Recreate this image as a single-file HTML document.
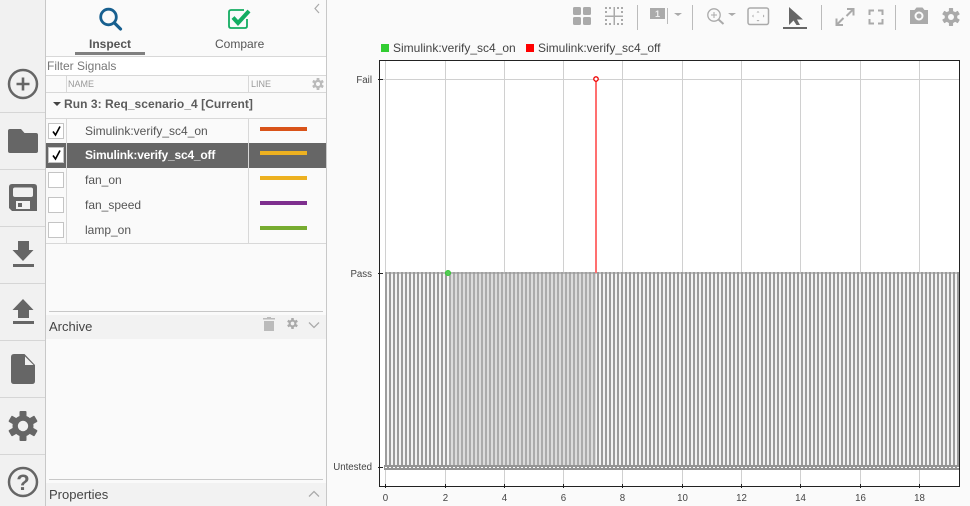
<!DOCTYPE html>
<html><head><meta charset="utf-8"><style>
html,body{margin:0;padding:0;width:970px;height:506px;overflow:hidden;background:#fafafa;font-family:"Liberation Sans",sans-serif;color:#555}
.a{position:absolute}
.t{position:absolute;font-size:12px;line-height:14px;white-space:nowrap}
.cb{position:absolute;left:48px;width:14px;height:14px;background:#fff;border:1px solid #c4c4c4}
.ln{position:absolute;left:260px;width:47px;height:4px}
.sep{position:absolute;left:0;width:45px;height:1px;background:#d6d6d6}
</style></head><body>
<div class="a" style="left:0;top:0;width:45px;height:506px;background:#f1f1f1;border-right:1px solid #c8c8c8"></div>
<div class="sep" style="top:112px"></div><div class="sep" style="top:169px"></div><div class="sep" style="top:226px"></div><div class="sep" style="top:283px"></div><div class="sep" style="top:340px"></div><div class="sep" style="top:397px"></div><div class="sep" style="top:454px"></div>
<div class="a" style="left:46px;top:0;width:280px;height:506px;background:#fafafa;border-right:1px solid #c8c8c8"></div>
<div class="a" style="left:46px;top:56px;width:280px;height:1px;background:#d8d8d8"></div>
<div class="a" style="left:46px;top:57px;width:280px;height:18px;background:#fff"></div>
<div class="t" style="left:47px;top:59px;color:#777">Filter Signals</div>
<div class="a" style="left:46px;top:75px;width:280px;height:1px;background:#d8d8d8"></div>
<div class="a" style="left:46px;top:92px;width:280px;height:1px;background:#d8d8d8"></div>
<div class="a" style="left:66px;top:76px;width:1px;height:16px;background:#d8d8d8"></div>
<div class="a" style="left:248px;top:76px;width:1px;height:16px;background:#d8d8d8"></div>
<div class="t" style="left:68px;top:77px;font-size:9px;color:#999">NAME</div>
<div class="t" style="left:251px;top:77px;font-size:9px;color:#999">LINE</div>
<div class="t" style="left:64px;top:97px;font-weight:bold;color:#5c5c5c;letter-spacing:.05px">Run 3: Req_scenario_4 [Current]</div>
<svg class="a" style="left:52px;top:101px" width="10" height="6"><path d="M1 1h8L5 5z" fill="#444"/></svg>
<div class="a" style="left:46px;top:118px;width:280px;height:1px;background:#d8d8d8"></div>
<div class="a" style="left:46px;top:243px;width:280px;height:1px;background:#d8d8d8"></div>
<div class="a" style="left:66px;top:119px;width:1px;height:124px;background:#d8d8d8"></div>
<div class="a" style="left:248px;top:119px;width:1px;height:124px;background:#d8d8d8"></div>
<div class="a" style="left:46px;top:143px;width:280px;height:25px;background:#666"></div>
<div class="a" style="left:66px;top:143px;width:1px;height:25px;background:#d8d8d8"></div>
<div class="a" style="left:248px;top:143px;width:1px;height:25px;background:#d8d8d8"></div>
<div class="cb" style="top:123px"></div><div class="cb" style="top:147px"></div><div class="cb" style="top:172px"></div><div class="cb" style="top:197px"></div><div class="cb" style="top:222px"></div>
<svg class="a" style="left:48px;top:123px" width="16" height="16"><path d="M5 8.500l2.500 3.500 4.500-8.500" fill="none" stroke="#000" stroke-width="1.600"/></svg>
<svg class="a" style="left:48px;top:147px" width="16" height="16"><path d="M5 8.500l2.500 3.500 4.500-8.500" fill="none" stroke="#000" stroke-width="1.600"/></svg>
<div class="t" style="left:85px;top:124px">Simulink:verify_sc4_on</div>
<div class="t" style="left:85px;top:148px;color:#fff;font-weight:bold;letter-spacing:-.2px">Simulink:verify_sc4_off</div>
<div class="t" style="left:85px;top:173px">fan_on</div>
<div class="t" style="left:85px;top:198px">fan_speed</div>
<div class="t" style="left:85px;top:223px">lamp_on</div>
<div class="ln" style="top:127px;background:#d95319"></div>
<div class="ln" style="top:151px;background:#edb120"></div>
<div class="ln" style="top:176px;background:#edb120"></div>
<div class="ln" style="top:201px;background:#7e2f8e"></div>
<div class="ln" style="top:226px;background:#77ac30"></div>
<svg class="a" style="left:312px;top:78px" width="12" height="12" viewBox="-15 -15 30 30"><g fill="#bbb"><circle r="10.500"/><rect x="-3.500" y="-15" width="7" height="30" rx="1"/><rect x="-3.500" y="-15" width="7" height="30" rx="1" transform="rotate(60)"/><rect x="-3.500" y="-15" width="7" height="30" rx="1" transform="rotate(120)"/></g><circle r="5" fill="#fafafa"/></svg>
<!-- tabs -->
<svg class="a" style="left:97px;top:6px" width="26" height="26"><circle cx="11.500" cy="11" r="7.800" fill="none" stroke="#175f8f" stroke-width="2.800"/><path d="M17.500 17l6 6" stroke="#175f8f" stroke-width="3.200" stroke-linecap="round"/></svg>
<svg class="a" style="left:227px;top:6px" width="26" height="24"><path d="M17 4H4Q2 4 2 6v14q0 2 2 2h14q2 0 2-2v-7" fill="none" stroke="#13ad62" stroke-width="1.800"/><path d="M6 11.500l5 5.500 11-12" fill="none" stroke="#13ad62" stroke-width="4"/></svg>
<div class="t" style="left:89px;top:37px;font-weight:bold;color:#555">Inspect</div>
<div class="t" style="left:215px;top:37px">Compare</div>
<div class="a" style="left:75px;top:52px;width:70px;height:3px;background:#808080"></div>
<svg class="a" style="left:312px;top:3px" width="10" height="12"><path d="M7 1L3 5.500 7 10" fill="none" stroke="#aaa" stroke-width="1.200"/></svg>
<!-- archive -->
<div class="a" style="left:49px;top:311px;width:274px;height:1px;background:#c8c8c8"></div>
<div class="a" style="left:46px;top:315px;width:280px;height:24px;background:#f2f2f2"></div>
<div class="t" style="left:49px;top:320px;color:#444;font-size:13px">Archive</div>
<svg class="a" style="left:262px;top:316px" width="14" height="16"><path fill="#bbb" d="M1 2h4V1h4v1h4v1.500H1zM2 5h10v10H2z"/></svg>
<svg class="a" style="left:287px;top:318px" width="11" height="11" viewBox="-15 -15 30 30"><g fill="#aaa"><circle r="10.500"/><rect x="-3.500" y="-15" width="7" height="30" rx="1"/><rect x="-3.500" y="-15" width="7" height="30" rx="1" transform="rotate(60)"/><rect x="-3.500" y="-15" width="7" height="30" rx="1" transform="rotate(120)"/></g><circle r="5" fill="#f2f2f2"/></svg>
<svg class="a" style="left:308px;top:321px" width="12" height="8"><path d="M1 1.500l5 5 5-5" fill="none" stroke="#aaa" stroke-width="1.300"/></svg>
<div class="a" style="left:49px;top:479px;width:274px;height:1px;background:#c8c8c8"></div>
<div class="a" style="left:46px;top:483px;width:280px;height:23px;background:#f2f2f2"></div>
<div class="t" style="left:49px;top:488px;color:#444;font-size:13px">Properties</div>
<svg class="a" style="left:308px;top:490px" width="12" height="8"><path d="M1 6.500l5-5 5 5" fill="none" stroke="#aaa" stroke-width="1.300"/></svg>
<!-- sidebar icons -->
<svg class="a" style="left:0;top:0;overflow:visible" width="45" height="506">
<g fill="#666">
<circle cx="23" cy="84" r="14" fill="none" stroke="#666" stroke-width="2.500"/><path d="M16.500 82.700h13v2.600h-13zM21.700 77.500h2.600v13h-2.600z"/>
<path d="M10 129h11l3.500 4H36q2 0 2 2v16q0 2-2 2H10q-2 0-2-2v-20q0-2 2-2z"/>
<path d="M12 184h22q3 0 3 3v24H12l-3-3v-21q0-3 3-3z"/>
<rect x="13" y="187.500" width="20" height="9.500" rx="2" fill="#f1f1f1"/>
<rect x="16" y="201" width="14" height="8" fill="#f1f1f1"/>
<rect x="18" y="203" width="4" height="4"/>
<path d="M18 241h11v9h4.500L23 261 12.500 250H18zM13 264h21v3H13z"/>
<path d="M23 299l10.500 11H29v8H18v-8h-5.500zM13 321h21v3H13z"/>
<path d="M14 354h10.500L35 365v16q0 3-3 3H14q-3 0-3-3v-24q0-3 3-3z"/>
<path fill="#f1f1f1" d="M25 356.500l8.500 8.500H25z"/>
<circle cx="23" cy="482" r="14" fill="none" stroke="#666" stroke-width="2.500"/>
<text x="23" y="490" text-anchor="middle" font-family="Liberation Sans" font-weight="bold" font-size="22" fill="#666">?</text>
<g transform="translate(23,426)"><circle r="10.500"/><rect x="-3.500" y="-15" width="7" height="30" rx="1"/><rect x="-3.500" y="-15" width="7" height="30" rx="1" transform="rotate(60)"/><rect x="-3.500" y="-15" width="7" height="30" rx="1" transform="rotate(120)"/><circle r="5.200" fill="#f1f1f1"/></g>
</g>
</svg>
<!-- toolbar -->
<svg class="a" style="left:560px;top:0" width="410" height="32">
<g fill="#aaa">
<rect x="13" y="7" width="8" height="8" rx="1.500"/><rect x="23" y="7" width="8" height="8" rx="1.500"/><rect x="13" y="17" width="8" height="8" rx="1.500"/><rect x="23" y="17" width="8" height="8" rx="1.500"/>
<path d="M45 15.500h18v1.500H45zM53.500 7h1.500v18h-1.500z"/>
<path d="M45 7h2v2h-2zM49 7h2v2h-2zM57 7h2v2h-2zM61 7h2v2h-2zM45 11h2v2h-2zM61 11h2v2h-2zM45 19h2v2h-2zM61 19h2v2h-2zM45 23h2v2h-2zM49 23h2v2h-2zM57 23h2v2h-2zM61 23h2v2h-2z"/>
<rect x="90" y="8" width="15" height="11"/>
<path d="M114 13h8l-4 3zM168 13h8l-4 3z"/>
<path d="M229 7L243 19.500H237L240 25H236.500L233.500 20.500 229 25z" fill="#666"/>
<path d="M350 10h4.500l2-2.500h6l2 2.500h3.500v14h-18zM359 11.500a4.500 4.500 0 1 0 0 9 4.500 4.500 0 0 0 0-9z" fill-rule="evenodd"/>
<circle cx="359" cy="16" r="2.500"/>
<g transform="translate(391,17) scale(.6)"><circle r="10.500"/><rect x="-3.500" y="-15" width="7" height="30" rx="1"/><rect x="-3.500" y="-15" width="7" height="30" rx="1" transform="rotate(60)"/><rect x="-3.500" y="-15" width="7" height="30" rx="1" transform="rotate(120)"/><circle r="5" fill="#fafafa"/></g>
</g>
<text x="97.500" y="17" text-anchor="middle" font-family="Liberation Sans" font-weight="bold" font-size="9" fill="#eee">1</text>
<path d="M107.500 8v16" stroke="#bbb" stroke-width="1"/>
<path d="M77.500 5v25M132.500 5v25M261.500 5v25M335.500 5v25" stroke="#bbb" stroke-width="1"/>
<circle cx="154" cy="15" r="6.200" fill="none" stroke="#aaa" stroke-width="1.300"/><path d="M158.500 19.500l5 4.500" stroke="#aaa" stroke-width="2"/><path d="M151 15h6M154 12v6" stroke="#aaa" stroke-width="1"/>
<rect x="188" y="8" width="20.500" height="16.500" rx="2" fill="none" stroke="#aaa" stroke-width="1.500"/>
<path d="M198 11l-1.500 1.500h3zM198 21.500l-1.500-1.500h3zM192 16l1.500-1.500v3zM204.500 16l-1.500-1.500v3z" fill="#aaa"/>
<rect x="223" y="27" width="24" height="2" fill="#666"/>
<path d="M287 9h6.500v6.500M293.500 9l-7 7M283 25h-6.500v-6.500M276.500 25l7-7" fill="none" stroke="#aaa" stroke-width="2"/>
<path d="M309.500 15v-4.500h4.500M322.500 15v-4.500h-4.500M309.500 19v4.500h4.500M322.500 19v4.500h-4.500" fill="none" stroke="#aaa" stroke-width="2"/>
</svg>
<!-- legend -->
<div class="a" style="left:381px;top:44px;width:8px;height:8px;background:#32cd32"></div>
<div class="t" style="left:393px;top:41px;color:#444">Simulink:verify_sc4_on</div>
<div class="a" style="left:526px;top:44px;width:8px;height:8px;background:#f00"></div>
<div class="t" style="left:538px;top:41px;color:#444">Simulink:verify_sc4_off</div>
<!-- plot -->
<svg class="a" style="left:0;top:0" width="970" height="506" font-family="Liberation Sans" font-size="9.700" fill="#444" shape-rendering="crispEdges">
<rect x="380" y="61" width="579" height="425" fill="#fff"/>
<g stroke="#d0d0d0" stroke-width="1">
<path d="M380 79.500h579"/>
<path d="M385.500 61v425M445.500 61v425M504.500 61v425M563.500 61v425M622.500 61v425M682.500 61v425M741.500 61v425M800.500 61v425M860.500 61v425M919.500 61v425"/>
</g>
<rect x="385" y="272" width="574" height="194" fill="#f4f4f4"/>
<rect x="449" y="272" width="147" height="194" fill="#dcdcdc"/>
<path d="M385 369H449" stroke="#9c9c9c" stroke-width="194" stroke-dasharray="2 2"/>
<path d="M449 369H596" stroke="#ababab" stroke-width="194" stroke-dasharray="2 2"/>
<path d="M597 369H959" stroke="#9c9c9c" stroke-width="194" stroke-dasharray="2 2" stroke-dashoffset="0"/>
<rect x="385" y="272" width="574" height="2" fill="#999" opacity=".6"/>
<rect x="384" y="465" width="575" height="5" fill="#949494"/>
<path d="M385 467.500H959" stroke="#fff" stroke-width="1" stroke-dasharray="2 2"/>
<path d="M596 80v193" stroke="#ff7070" stroke-width="2"/>
<g shape-rendering="auto">
<circle cx="596" cy="79" r="2.200" fill="#fff" stroke="#e00" stroke-width="1.300"/>
<circle cx="448" cy="273" r="2.500" fill="#55cc55" stroke="#32c832" stroke-width="1"/>
</g>
<rect x="379" y="60" width="581" height="1" fill="#222"/>
<rect x="379" y="60" width="1" height="427" fill="#222"/>
<rect x="379" y="486" width="581" height="1" fill="#222"/>
<rect x="959" y="60" width="1" height="427" fill="#222"/>
<g stroke="#222" stroke-width="1">
<path d="M378 79.500h5M378 273.500h5M378 467.500h5"/>
<path d="M385.500 484v4M445.500 484v4M504.500 484v4M563.500 484v4M622.500 484v4M682.500 484v4M741.500 484v4M800.500 484v4M860.500 484v4M919.500 484v4"/>
</g>
<g text-anchor="end"><text x="372" y="83">Fail</text><text x="372" y="277">Pass</text><text x="372" y="470">Untested</text></g>
<g text-anchor="middle"><text x="385.500" y="501">0</text><text x="445.500" y="501">2</text><text x="504.500" y="501">4</text><text x="563.500" y="501">6</text><text x="622.500" y="501">8</text><text x="682.500" y="501">10</text><text x="741.500" y="501">12</text><text x="800.500" y="501">14</text><text x="860.500" y="501">16</text><text x="919.500" y="501">18</text></g>
</svg>
</body></html>
